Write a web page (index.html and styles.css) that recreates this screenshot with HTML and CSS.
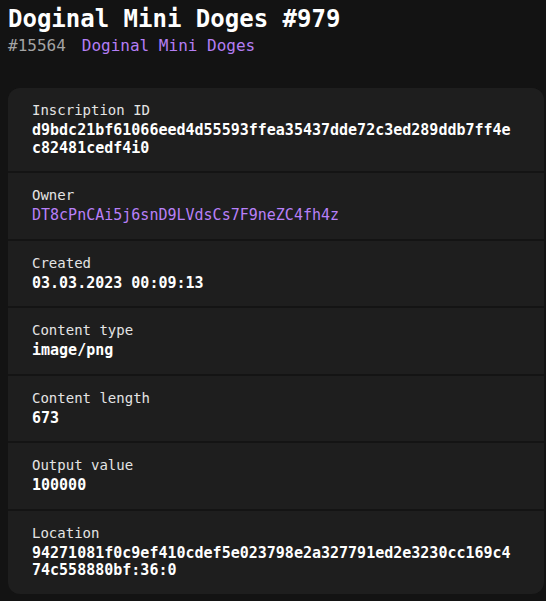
FILE: index.html
```html
<!DOCTYPE html>
<html>
<head>
<meta charset="utf-8">
<link rel="stylesheet" href="styles.css">
</head>
<body>
<main class="page">
  <h1 class="title">Doginal Mini Doges #979</h1>
  <div class="subtitle">
    <span class="number">#15564</span>
    <span class="collection">Doginal Mini Doges</span>
  </div>
  <section class="card">
    <div class="row">
      <div class="label">Inscription ID</div>
      <div class="value">d9bdc21bf61066eed4d55593ffea35437dde72c3ed289ddb7ff4ec82481cedf4i0</div>
    </div>
    <div class="row">
      <div class="label">Owner</div>
      <div class="value link">DT8cPnCAi5j6snD9LVdsCs7F9neZC4fh4z</div>
    </div>
    <div class="row">
      <div class="label">Created</div>
      <div class="value">03.03.2023 00:09:13</div>
    </div>
    <div class="row">
      <div class="label">Content type</div>
      <div class="value">image/png</div>
    </div>
    <div class="row">
      <div class="label">Content length</div>
      <div class="value">673</div>
    </div>
    <div class="row">
      <div class="label">Output value</div>
      <div class="value">100000</div>
    </div>
    <div class="row">
      <div class="label">Location</div>
      <div class="value">94271081f0c9ef410cdef5e023798e2a327791ed2e3230cc169c474c558880bf:36:0</div>
    </div>
  </section>
</main>
</body>
</html>
```
FILE: styles.css
```css
html, body {
  margin: 0;
  padding: 0;
  background: #131313;
}
body {
  font-family: "DejaVu Sans Mono", "Liberation Mono", monospace;
  color: #ffffff;
}
.page {
  padding: 4px 2px 6px 8px;
}
.title {
  margin: 0;
  font-size: 24px;
  line-height: 30px;
  font-weight: bold;
  color: #ffffff;
}
.subtitle {
  display: flex;
  gap: 16px;
  font-size: 16px;
  line-height: 24px;
}
.number {
  color: #a3a3a3;
}
.collection {
  color: #b47ef5;
}
.card {
  margin-top: 30px;
  display: flex;
  flex-direction: column;
  gap: 2px;
  background: #141414;
  border-radius: 12px;
  overflow: hidden;
}
.row {
  background: #1e1e1e;
  padding: 12px 30px 14px 24px;
}
.label {
  font-size: 14px;
  line-height: 20px;
  color: #e4e4e4;
}
.value {
  margin-top: 2px;
  font-size: 15px;
  line-height: 17.5px;
  font-weight: bold;
  color: #ffffff;
  word-break: break-all;
}
.value.link {
  color: #b880f8;
  font-weight: normal;
}
```
